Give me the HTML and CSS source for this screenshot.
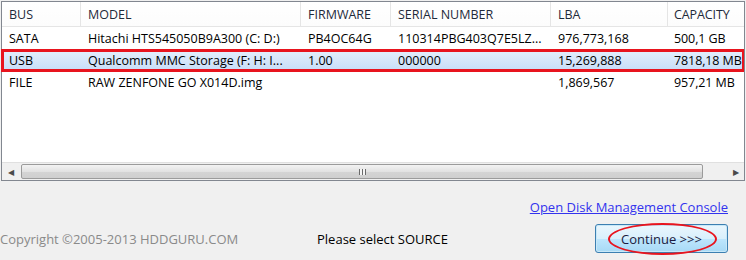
FILE: index.html
```html
<!DOCTYPE html>
<html lang="en">
<head>
  <meta charset="UTF-8">
  <title>Select source</title>
  <link rel="stylesheet" href="styles.css">
</head>
<body>

  <div class="drive-list">
    <div class="row header">
      <div class="cell">BUS</div>
      <div class="cell">MODEL</div>
      <div class="cell">FIRMWARE</div>
      <div class="cell">SERIAL NUMBER</div>
      <div class="cell">LBA</div>
      <div class="cell">CAPACITY</div>
    </div>
    <div class="rows">
      <div class="row">
        <div class="cell">SATA</div>
        <div class="cell">Hitachi HTS545050B9A300 (C: D:)</div>
        <div class="cell">PB4OC64G</div>
        <div class="cell">110314PBG403Q7E5LZ...</div>
        <div class="cell">976,773,168</div>
        <div class="cell">500,1 GB</div>
      </div>
      <div class="row selected">
        <div class="cell">USB</div>
        <div class="cell">Qualcomm MMC Storage (F: H: I...</div>
        <div class="cell">1.00</div>
        <div class="cell">000000</div>
        <div class="cell">15,269,888</div>
        <div class="cell">7818,18 MB</div>
      </div>
      <div class="row">
        <div class="cell">FILE</div>
        <div class="cell">RAW ZENFONE GO X014D.img</div>
        <div class="cell"></div>
        <div class="cell"></div>
        <div class="cell">1,869,567</div>
        <div class="cell">957,21 MB</div>
      </div>
    </div>
    <div class="hscroll">
      <div class="arrow">&#9664;</div>
      <div class="track">
        <div class="thumb"><span class="grip"></span></div>
      </div>
      <div class="arrow">&#9654;</div>
    </div>
  </div>

  <div class="footer">
    <div class="link-row">
      <a href="#" class="console-link">Open Disk Management Console</a>
    </div>
    <div class="bottom-row">
      <span class="copyright">Copyright &copy;2005-2013 HDDGURU.COM</span>
      <span class="status">Please select SOURCE</span>
      <button class="continue">Continue &gt;&gt;&gt;</button>
    </div>
  </div>

</body>
</html>
```

FILE: styles.css
```css
body {
  margin: 0;
  background: #f0f0f0;
  font-family: 'Open Sans', sans-serif;
  font-size: 13px;
  color: #000;
  width: 746px;
  height: 260px;
  overflow: hidden;
}

.drive-list {
  margin: 1px;
  height: 178px;
  border: 1px solid #828790;
  background: #fff;
  display: flex;
  flex-direction: column;
  font-size: 12.5px;
}

.row {
  display: grid;
  grid-template-columns: 79px 220px 90px 160px 117px 1fr;
  height: 22px;
  align-items: center;
  position: relative;
}

.cell {
  padding-left: 7px;
  white-space: nowrap;
  overflow: hidden;
}

.cell:last-child {
  padding-left: 6px;
  letter-spacing: -0.1px;
}

.header {
  height: 24px;
  border-bottom: 1px solid #e5e5e5;
  background: linear-gradient(#fff, #fcfcfc);
}

.header .cell {
  height: 100%;
  line-height: 26px;
  border-right: 1px solid #e5e5e5;
  color: #1e2a3a;
}

.header .cell:last-child {
  border-right: none;
}

.rows {
  flex: 1;
}

.selected {
  background: linear-gradient(#e6f0fc, #c6ddf8);
}

.selected::after {
  content: "";
  position: absolute;
  left: -1px;
  right: 0;
  top: 0;
  bottom: -1px;
  border: 3px solid #e8141e;
  border-right-width: 2px;
}

.hscroll {
  height: 17px;
  display: flex;
  background: #f0f0f0;
  border-top: 1px solid #e0e0e0;
}

.arrow {
  width: 17px;
  font-size: 8px;
  line-height: 17px;
  text-align: center;
  color: #4a4a4a;
}

.track {
  flex: 1;
  padding: 0 24px 0 2px;
  display: flex;
}

.thumb {
  flex: 1;
  margin: 1px 0;
  border: 1px solid #9b9b9b;
  border-radius: 2px;
  background: linear-gradient(#f3f3f3, #e2e2e2 50%, #d4d4d4 51%, #cfcfcf);
  display: flex;
  justify-content: center;
  align-items: center;
}

.grip {
  width: 7px;
  height: 6px;
  background: repeating-linear-gradient(90deg, #6a6a6a 0 1px, #f4f4f4 1px 3px);
}

.footer {
  padding: 16px 18px 0 0;
}

.link-row {
  display: flex;
  justify-content: flex-end;
  height: 22px;
}

.console-link {
  color: #3333ee;
  text-decoration: underline;
}

.bottom-row {
  display: flex;
  align-items: center;
  margin-top: 4px;
}

.copyright {
  color: #8a8a8a;
  width: 317px;
}

.status {
  flex: 1;
}

.continue {
  width: 133px;
  height: 29px;
  font-family: 'Open Sans', sans-serif;
  font-size: 13px;
  color: #1a1a40;
  border: 1px solid #3c7fb1;
  border-radius: 3px;
  background: linear-gradient(#eaf6fd, #d9f0fc 50%, #bee6fd 51%, #a7d9f5);
  box-shadow: inset 0 0 0 1px #c8e8f8;
  position: relative;
}

.continue::after {
  content: "";
  position: absolute;
  left: 12px;
  right: 10px;
  top: -2px;
  bottom: -3px;
  border: 2px solid #e8141e;
  border-radius: 50%;
}
```
